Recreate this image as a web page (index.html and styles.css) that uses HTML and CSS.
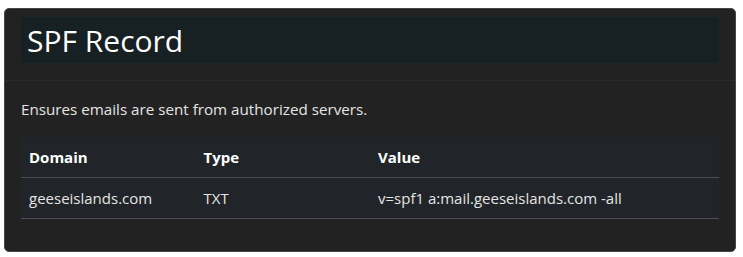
FILE: index.html
```html
<!DOCTYPE html>
<html lang="en">
<head>
    <meta charset="UTF-8">
    <meta name="viewport" content="width=device-width, initial-scale=1.0">
    <title>SPF Record</title>
    <link rel="stylesheet" href="styles.css">
</head>
<body>
    <div class="card">
        <div class="card-header">
            <h2 class="title">SPF Record</h2>
        </div>
        <div class="card-body">
            <p class="lead">Ensures emails are sent from authorized servers.</p>
            <table class="records">
                <thead>
                    <tr>
                        <th class="col-domain">Domain</th>
                        <th class="col-type">Type</th>
                        <th>Value</th>
                    </tr>
                </thead>
                <tbody>
                    <tr>
                        <td>geeseislands.com</td>
                        <td>TXT</td>
                        <td>v=spf1 a:mail.geeseislands.com -all</td>
                    </tr>
                </tbody>
            </table>
        </div>
    </div>
</body>
</html>
```

FILE: styles.css
```css
body {
    margin: 8px 7px 0 4px;
    background-color: #ffffff;
    font-family: "Open Sans", "Noto Sans", sans-serif;
    color: #dee2e6;
}
.card {
    background-color: #222222;
    border: 1px solid #454545;
    border-radius: 5px;
}
.card-header {
    padding: 8px 16px 17px;
    border-bottom: 1px solid #2c2c2c;
}
.title {
    margin: 0;
    height: 46px;
    padding: 0 6px;
    background-color: #172022;
    color: #ffffff;
    font-size: 30px;
    font-weight: 400;
    line-height: 48px;
}
.card-body {
    padding: 16px 16px 16px;
}
.lead {
    margin: 0 0 16px;
    font-size: 15.2px;
    line-height: 24px;
    color: #e4e4e4;
}
.records {
    width: 100%;
    border-collapse: collapse;
    background-color: #212529;
    font-size: 15px;
    margin-bottom: 16px;
}
.records th,
.records td {
    padding: 8px;
    line-height: 24px;
    text-align: left;
    border-bottom: 1px solid #4a4e52;
}
.records th {
    color: #ffffff;
    font-weight: 700;
}
.records td {
    color: #e4e4e4;
}
.col-domain,
.col-type {
    width: 25%;
}
```
